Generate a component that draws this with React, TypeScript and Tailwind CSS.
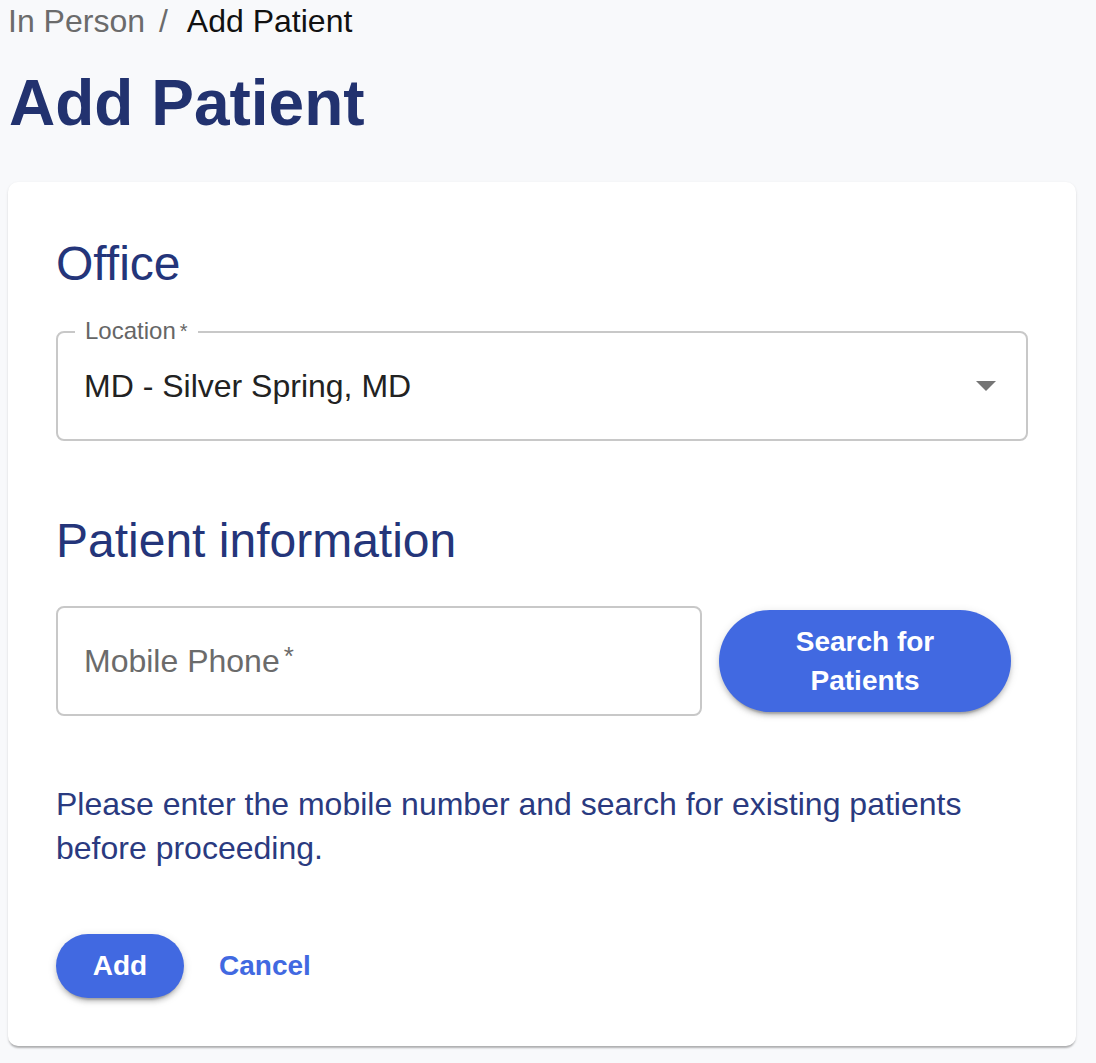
const navy = 'text-[#22326f]';

const App = () => {
  return (
    <div className="min-h-screen bg-[#f8f9fb] pb-[18px] font-['Liberation_Sans',Arial,sans-serif]">
      <div className="px-2 pt-[3px] text-[32px] leading-[37px]">
        <span className="text-[#6b6b6b]">In Person</span>
        <span className="ml-[14px] mr-[19px] text-[#6b6b6b]">/</span>
        <span className="text-[#111]">Add Patient</span>
      </div>
      <h1 className={`mt-[30px] px-[9px] text-[64px] font-bold leading-[66px] ${navy}`}>Add Patient</h1>

      <div className="ml-2 mr-[20px] mt-[46px] rounded-[10px] bg-white px-[48px] pb-[48px] pt-[54px] shadow-[0_3px_2px_-1px_rgba(0,0,0,0.25),0_1px_3px_0_rgba(0,0,0,0.1)]">
        <h2 className="text-[48px] leading-[56px] text-[#24357a]">Office</h2>

        <div className="relative mt-[39px] flex h-[110px] items-center justify-between rounded-[8px] border-2 border-[#c8c8c8] pl-[26px] pr-[30px]">
          <span className="absolute left-[17px] top-[-17px] bg-white px-[10px] text-[24px] leading-[30px] text-[#666]">
            Location<span className="ml-[4px] text-[20px] align-top">*</span>
          </span>
          <span className="text-[32px] text-[#222]">MD - Silver Spring, MD</span>
          <svg width="20" height="10" viewBox="0 0 20 10">
            <path d="M0 0h20L10 10z" fill="#757575" />
          </svg>
        </div>

        <h2 className="mt-[72px] text-[48px] leading-[56px] text-[#24357a]">Patient information</h2>

        <div className="mt-[37px] flex items-center gap-[17px]">
          <div className="flex h-[110px] w-[646px] items-center rounded-[8px] border-2 border-[#c8c8c8] pl-[26px]">
            <span className="text-[32px] text-[#6b6b6b]">
              Mobile Phone<span className="ml-[4px] text-[26px] align-top">*</span>
            </span>
          </div>
          <button className="h-[102px] w-[292px] rounded-full bg-[#4169e1] text-[28px] font-bold leading-[39px] text-white shadow-[0_6px_2px_-4px_rgba(0,0,0,0.2),0_4px_4px_0_rgba(0,0,0,0.14),0_2px_10px_0_rgba(0,0,0,0.12)]">
            Search for
            <br />
            Patients
          </button>
        </div>

        <p className="mt-[66px] text-[32px] leading-[44px] text-[#2a3a80]">
          Please enter the mobile number and search for existing patients
          <br />
          before proceeding.
        </p>

        <div className="mt-[64px] flex items-center gap-[35px]">
          <button className="h-[64px] w-[128px] rounded-full bg-[#4169e1] text-[28px] font-bold text-white shadow-[0_6px_2px_-4px_rgba(0,0,0,0.2),0_4px_4px_0_rgba(0,0,0,0.14),0_2px_10px_0_rgba(0,0,0,0.12)]">
            Add
          </button>
          <button className="text-[28px] font-bold text-[#4169e1]">Cancel</button>
        </div>
      </div>
    </div>
  );
};

export default App;
